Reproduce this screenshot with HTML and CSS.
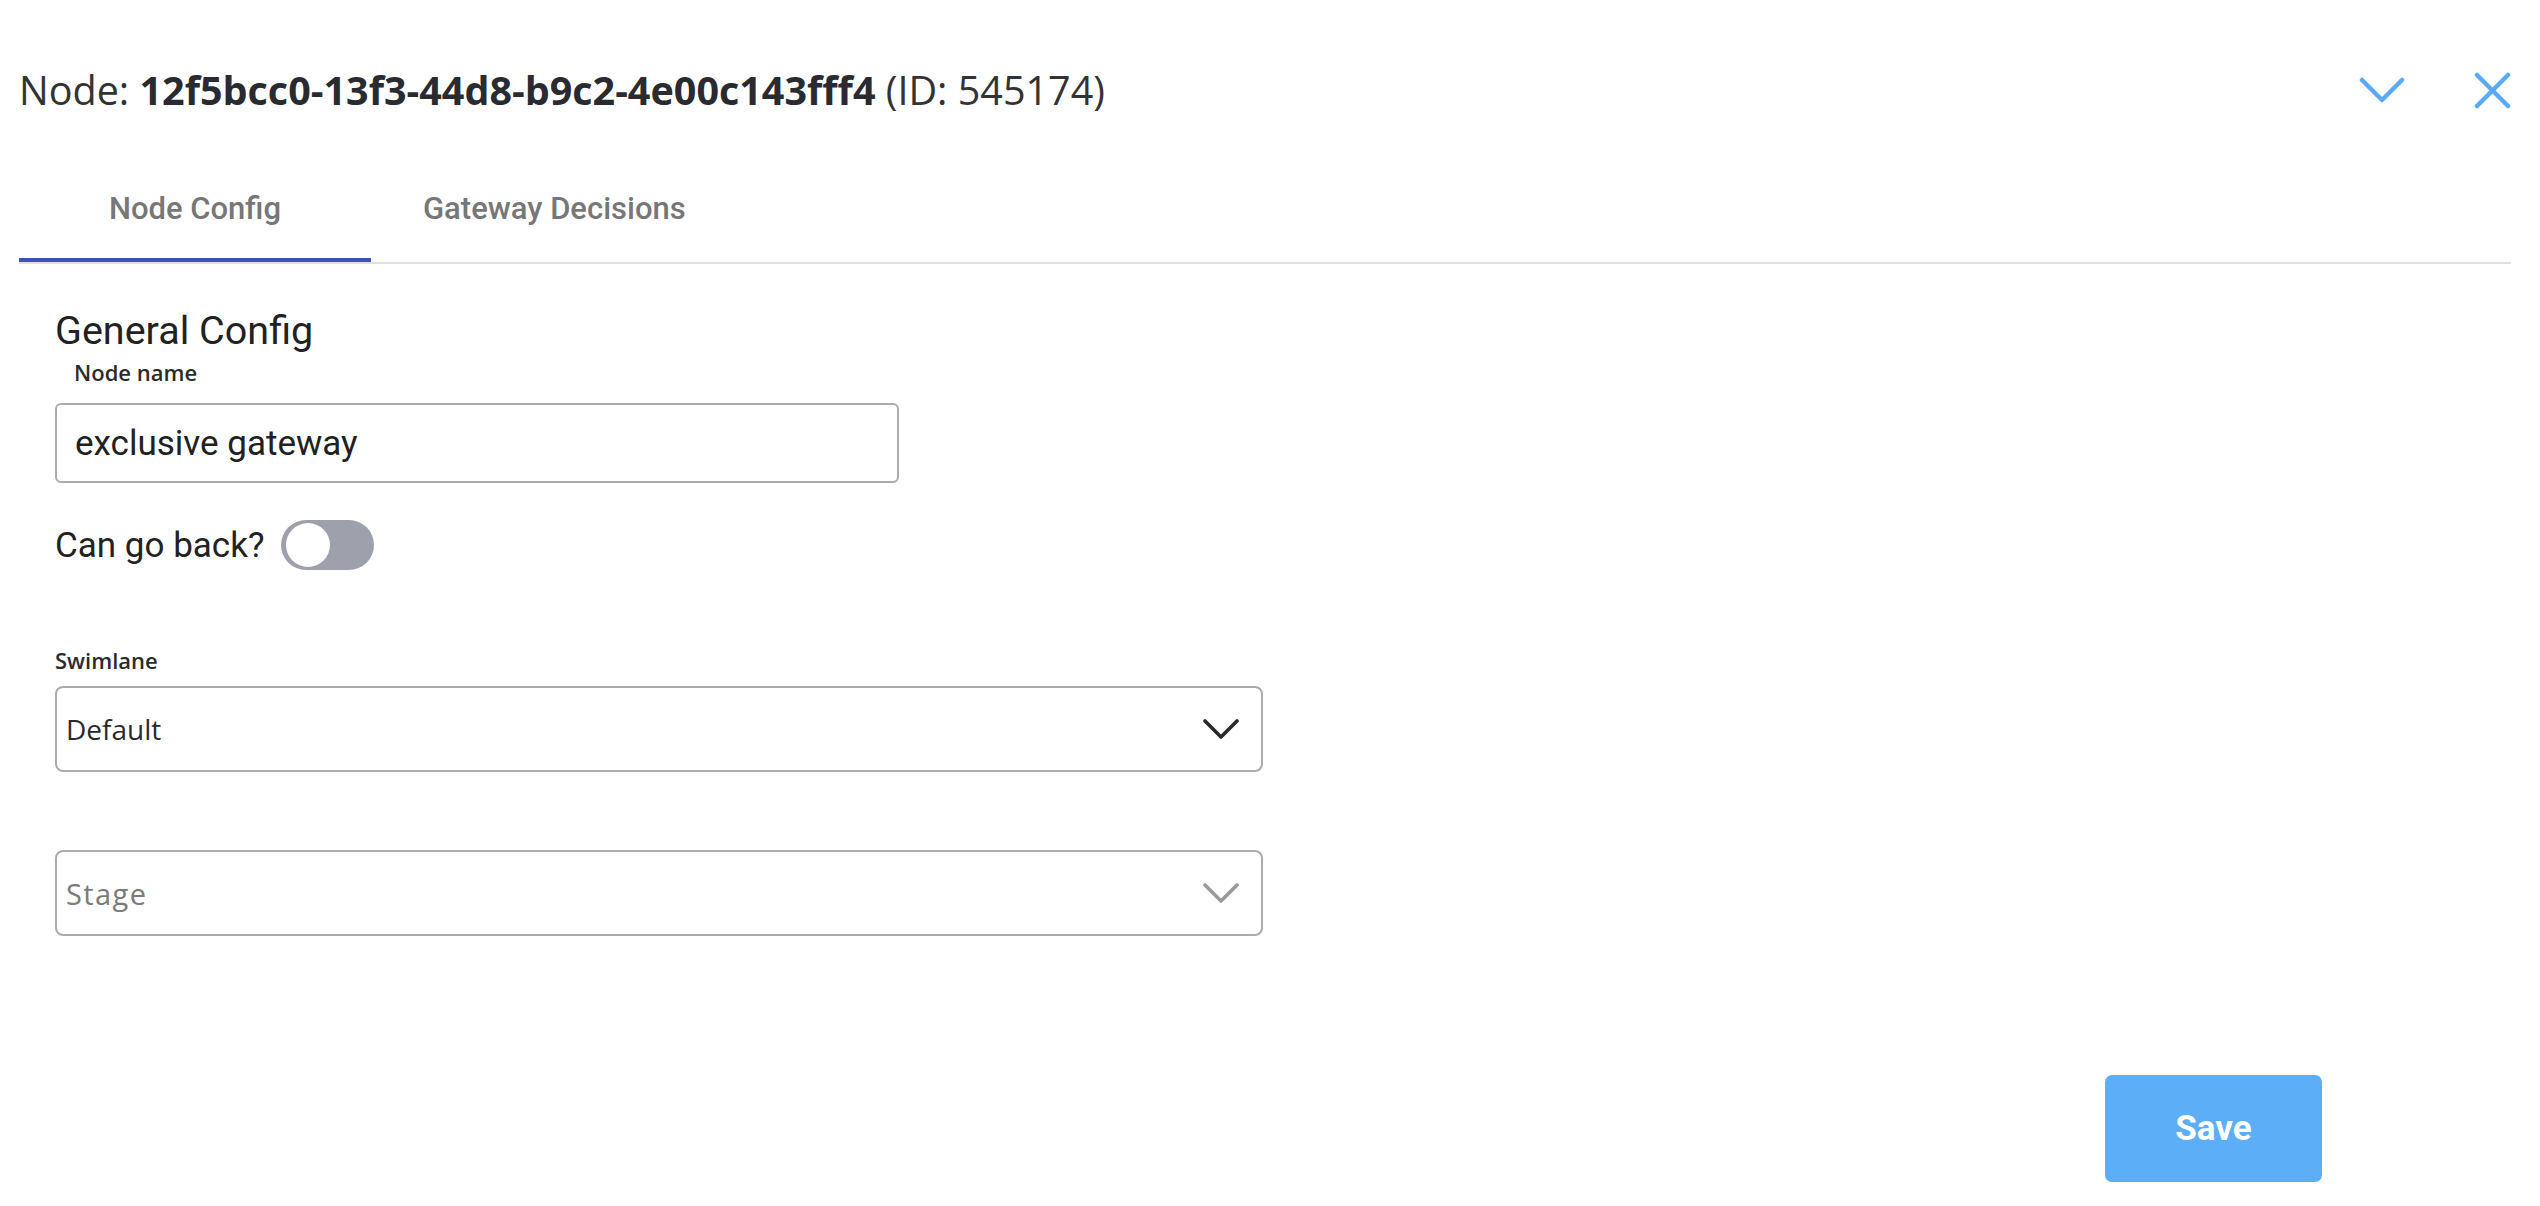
FILE: index.html
```html
<!DOCTYPE html>
<html lang="en">
<head>
<meta charset="utf-8">
<title>Node config</title>
<link rel="stylesheet" href="styles.css">
</head>
<body>
<div class="panel">
  <header class="header">
    <h1 class="title">Node: <b>12f5bcc0-13f3-44d8-b9c2-4e00c143fff4</b> (ID: 545174)</h1>
    <div class="actions">
      <button class="icon-btn chevron-btn" aria-label="Collapse">
        <svg width="46" height="27" viewBox="0 0 46 27"><polyline points="3,3 23,23 43,3" fill="none" stroke="currentColor" stroke-width="4.5" stroke-linecap="round" stroke-linejoin="round"/></svg>
      </button>
      <button class="icon-btn close-btn" aria-label="Close">
        <svg width="37" height="37" viewBox="0 0 37 37"><path d="M3 3 L34 34 M34 3 L3 34" fill="none" stroke="currentColor" stroke-width="4.5" stroke-linecap="round"/></svg>
      </button>
    </div>
  </header>

  <nav class="tabs">
    <div class="tab tab-active">Node Config</div>
    <div class="tab">Gateway Decisions</div>
  </nav>

  <section class="content">
    <h2 class="section-title">General Config</h2>
    <label class="field-label field-label-indent">Node name</label>
    <div class="text-input">exclusive gateway</div>

    <div class="toggle-row">
      <span class="toggle-label">Can go back?</span>
      <span class="switch"><span class="knob"></span></span>
    </div>

    <label class="field-label swim-label">Swimlane</label>
    <div class="select">
      <span class="select-value">Default</span>
      <svg class="select-chevron" width="36" height="22" viewBox="0 0 36 22"><polyline points="2,3 18,19 34,3" fill="none" stroke="currentColor" stroke-width="3.6" stroke-linecap="round" stroke-linejoin="round"/></svg>
    </div>

    <div class="select select-empty">
      <span class="select-value">Stage</span>
      <svg class="select-chevron" width="36" height="22" viewBox="0 0 36 22"><polyline points="2,3 18,19 34,3" fill="none" stroke="currentColor" stroke-width="3.6" stroke-linecap="round" stroke-linejoin="round"/></svg>
    </div>
  </section>

  <footer class="footer">
    <button class="save-btn">Save</button>
  </footer>
</div>
</body>
</html>
```

FILE: styles.css
```css
html, body {
  margin: 0;
  padding: 0;
  background: #ffffff;
}

.panel {
  width: 2492px;
  padding-left: 19px;
  font-family: Roboto, "Liberation Sans", sans-serif;
}

.header {
  display: flex;
  align-items: center;
  justify-content: space-between;
  height: 62px;
  padding: 59px 0 33px 0;
}

.title {
  margin: 0;
  font-family: "Open Sans", "Liberation Sans", sans-serif;
  font-weight: 400;
  font-size: 39.5px;
  line-height: 62px;
  color: #333333;
  white-space: nowrap;
}

.title b {
  font-weight: 700;
  color: #2a2a31;
}

.actions {
  display: flex;
  align-items: center;
  gap: 69px;
}

.icon-btn {
  border: 0;
  background: transparent;
  padding: 0;
  color: #5aabf5;
  display: flex;
  align-items: center;
  justify-content: center;
}

.tabs {
  display: flex;
  border-bottom: 2px solid #e0e0e0;
}

.tab {
  position: relative;
  box-sizing: border-box;
  height: 108px;
  min-width: 352px;
  padding: 0 52px;
  display: flex;
  align-items: center;
  justify-content: center;
  font-family: Roboto, "Liberation Sans", sans-serif;
  font-weight: 500;
  font-size: 31px;
  color: #777777;
}

.tab + .tab {
  min-width: 0;
}

.tab-active::after {
  content: "";
  position: absolute;
  left: 0;
  right: 0;
  bottom: 0;
  height: 4px;
  background: #3f51b5;
}

.content {
  padding-left: 36px;
  display: flex;
  flex-direction: column;
  align-items: flex-start;
}

.section-title {
  margin: 45px 0 0 0;
  font-family: Roboto, "Liberation Sans", sans-serif;
  font-weight: 400;
  font-size: 39.5px;
  line-height: 44px;
  color: #222222;
}

.field-label {
  display: block;
  font-family: "Open Sans", "Liberation Sans", sans-serif;
  font-weight: 600;
  font-size: 22px;
  line-height: 30px;
  color: #2b2b2b;
}

.field-label-indent {
  margin-top: 4px;
  padding-left: 19px;
}

.text-input {
  box-sizing: border-box;
  margin-top: 16px;
  width: 844px;
  height: 80px;
  border: 2px solid #ababab;
  border-radius: 6px;
  padding: 0 18px;
  display: flex;
  align-items: center;
  font-family: Roboto, "Liberation Sans", sans-serif;
  font-size: 35px;
  color: #212121;
}

.toggle-row {
  margin-top: 37px;
  display: flex;
  align-items: center;
  gap: 17px;
}

.toggle-label {
  font-family: Roboto, "Liberation Sans", sans-serif;
  font-size: 35px;
  color: #222222;
}

.switch {
  box-sizing: border-box;
  width: 93px;
  height: 50px;
  border-radius: 25px;
  background: #9ea0ac;
  padding: 3px 5px;
  display: flex;
  align-items: center;
}

.knob {
  width: 44px;
  height: 44px;
  border-radius: 50%;
  background: #ffffff;
}

.swim-label {
  margin-top: 75px;
}

.select {
  box-sizing: border-box;
  margin-top: 11px;
  width: 1208px;
  height: 86px;
  border: 2px solid #ababab;
  border-radius: 8px;
  padding: 0 22px 0 9px;
  display: flex;
  align-items: center;
  justify-content: space-between;
  color: #2a2a2e;
}

.select-empty {
  margin-top: 78px;
  color: #9a9a9a;
}

.select-value {
  font-family: "Open Sans", "Liberation Sans", sans-serif;
  font-size: 28px;
  color: #2a2a2e;
}

.select-empty .select-value {
  color: #7a7a7a;
  font-size: 29px;
  letter-spacing: 1.4px;
}

.select-chevron {
  display: block;
}

.footer {
  display: flex;
  justify-content: flex-end;
  padding-right: 189px;
  margin-top: 139px;
}

.save-btn {
  width: 217px;
  height: 107px;
  border: 0;
  border-radius: 7px;
  background: #5caef7;
  color: #ffffff;
  font-family: Roboto, "Liberation Sans", sans-serif;
  font-weight: 700;
  font-size: 35px;
}
```
